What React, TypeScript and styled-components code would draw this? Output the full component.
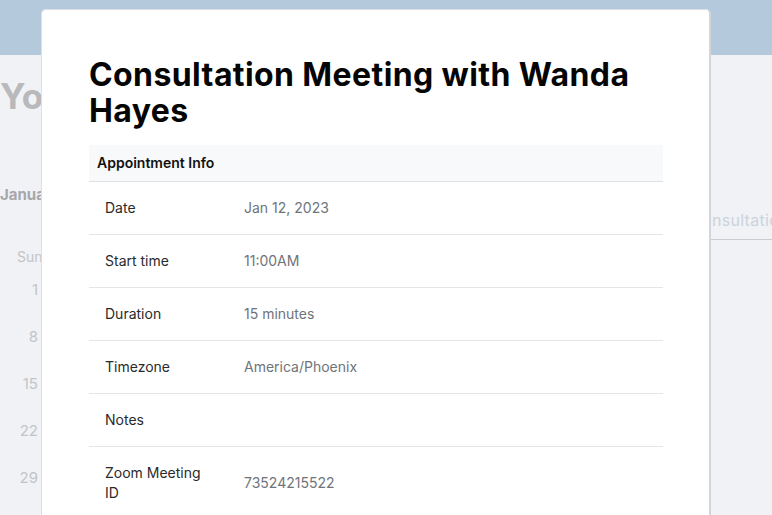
import * as React from 'react';
import styled, { createGlobalStyle } from 'styled-components';

const GlobalStyle = createGlobalStyle`
    html, body {
        margin: 0;
        padding: 0;
        overflow: hidden;
    }
    body {
        font-family: Inter, "Liberation Sans", sans-serif;
        background-color: #f0f2f5;
    }
`;

const Page = styled.div`
    position: relative;
    width: 772px;
    height: 515px;
    overflow: hidden;
    background-color: #f0f2f5;
`;

const TopBand = styled.div`
    height: 55px;
    background-color: #b5c9dc;
`;

const Body = styled.div`
    display: grid;
    grid-template-columns: 120px 1fr 67px;
`;

const LeftColumn = styled.div`
    display: flex;
    flex-direction: column;
`;

const PageTitle = styled.h1`
    margin: 21px 0 0;
    font-size: 35px;
    line-height: 40px;
    font-weight: 700;
    color: #b9b9bb;
    white-space: nowrap;
`;

const MonthName = styled.div`
    margin-top: 69px;
    font-size: 15px;
    font-weight: 700;
    color: #a6a7aa;
    white-space: nowrap;
`;

const Calendar = styled.div`
    display: flex;
    flex-direction: column;
    width: 38px;
    margin-top: 44px;
    color: #c3c4c7;
    font-size: 15px;
    text-align: right;
`;

const DayName = styled.div`
    font-size: 14px;
    height: 32px;
    padding-left: 17px;
    text-align: left;
    white-space: nowrap;
`;

const DayNumber = styled.div`
    height: 47px;
    line-height: 20px;
`;

const TabPanel = styled.div`
    display: flex;
    flex-direction: column;
    padding-top: 155px;
    margin-left: -3px;
`;

const TabLabel = styled.div`
    font-size: 16px;
    color: #cbd3dc;
    white-space: nowrap;
    padding-bottom: 9px;
    border-bottom: 1px solid #c9cdd2;
    text-indent: -12px;
    letter-spacing: 0.3px;
    overflow: hidden;
`;

const Modal = styled.div`
    position: absolute;
    left: 41px;
    top: 9px;
    width: 670px;
    height: 560px;
    box-sizing: border-box;
    padding: 47px 47px 0;
    background-color: #ffffff;
    border-radius: 5px;
    border: 1px solid #dcdfe3;
    border-right: 2px solid #d2d5d9;
`;

const Title = styled.h2`
    margin: 0 0 16px;
    font-size: 32px;
    line-height: 36px;
    font-weight: 700;
    color: #050505;
    letter-spacing: 0.4px;
`;

const InfoTable = styled.table`
    width: 574px;
    border-collapse: collapse;
    font-size: 14px;
    line-height: 20px;
`;

const HeaderCell = styled.th`
    padding: 8px;
    text-align: left;
    font-weight: 600;
    color: #111;
    background-color: #f8f9fa;
    border-bottom: 1px solid #dee2e6;
`;

const Row = styled.tr`
    border-bottom: 1px solid #e3e6e9;
`;

const Cell = styled.td<{ muted?: boolean }>`
    padding: 16px;
    vertical-align: middle;
    color: ${(p) => (p.muted ? '#6f747a' : '#2a2a2a')};
    width: ${(p) => (p.muted ? 'auto' : '107px')};
`;

const rows: Array<[string, string]> = [
    ['Date', 'Jan 12, 2023'],
    ['Start time', '11:00AM'],
    ['Duration', '15 minutes'],
    ['Timezone', 'America/Phoenix'],
    ['Notes', ''],
    ['Zoom Meeting ID', '73524215522'],
];

const days = ['1', '8', '15', '22', '29'];

const App: React.FC = () => {
    return (
        <>
            <GlobalStyle />
            <Page>
                <TopBand />
                <Body>
                    <LeftColumn>
                        <PageTitle>Your Appointments</PageTitle>
                        <MonthName>January 2023</MonthName>
                        <Calendar>
                            <DayName>Sun</DayName>
                            {days.map((d) => (
                                <DayNumber key={d}>{d}</DayNumber>
                            ))}
                        </Calendar>
                    </LeftColumn>
                    <div />
                    <TabPanel>
                        <TabLabel>Consultation</TabLabel>
                    </TabPanel>
                </Body>

                <Modal>
                    <Title>Consultation Meeting with Wanda Hayes</Title>
                    <InfoTable>
                        <thead>
                            <tr>
                                <HeaderCell colSpan={2}>Appointment Info</HeaderCell>
                            </tr>
                        </thead>
                        <tbody>
                            {rows.map(([label, value]) => (
                                <Row key={label}>
                                    <Cell>{label}</Cell>
                                    <Cell muted>{value}</Cell>
                                </Row>
                            ))}
                        </tbody>
                    </InfoTable>
                </Modal>
            </Page>
        </>
    );
};

export default App;
